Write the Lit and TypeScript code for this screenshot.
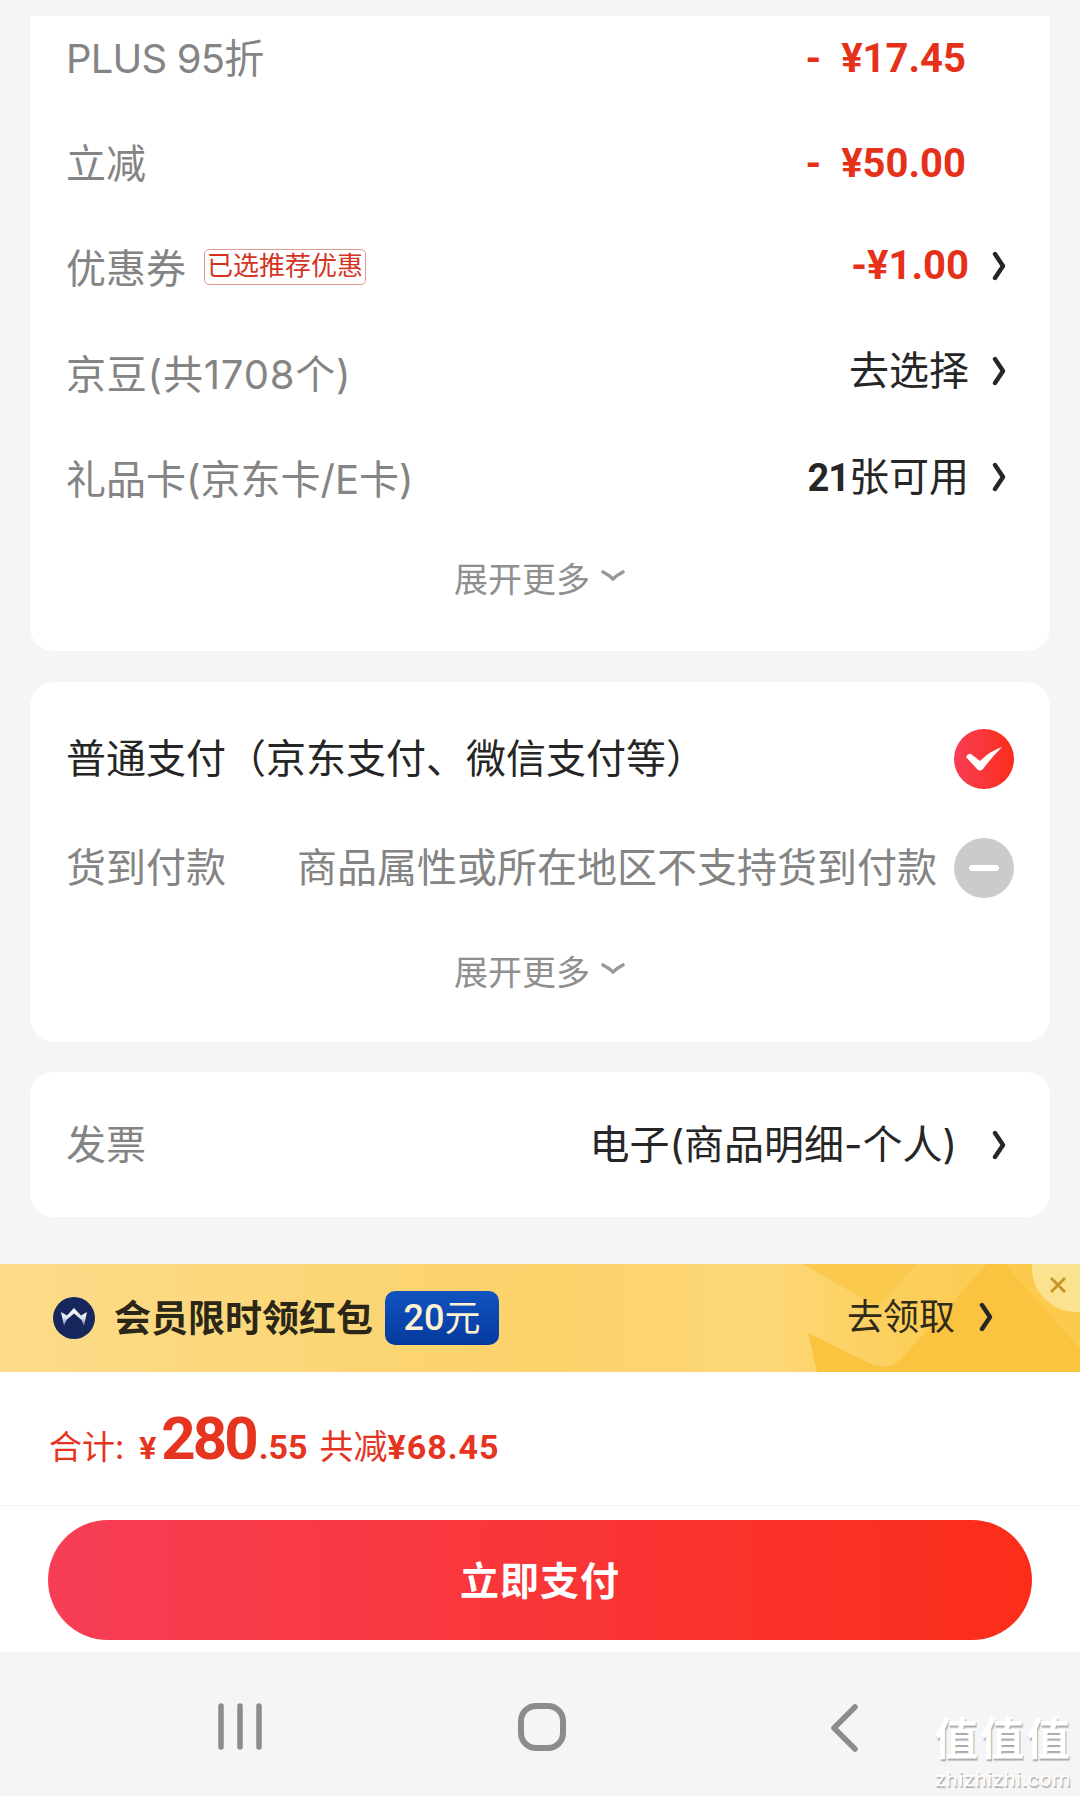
import { LitElement, html, css, svg } from "lit";
import { customElement } from "lit/decorators.js";

const chev = html`<svg class="chev" viewBox="0 0 14 30"><path d="M3 3 L11 15 L3 27" fill="none" stroke="#262626" stroke-width="4.4" stroke-linecap="round" stroke-linejoin="round"/></svg>`;
const more = html`<div class="more"><span>展开更多</span><svg viewBox="0 0 26 14"><path d="M3 3 Q9 6 13 10 Q17 6 23 3" fill="none" stroke="#999" stroke-width="3.6" stroke-linecap="round" stroke-linejoin="round"/></svg></div>`;

@customElement("app-root")
export class AppRoot extends LitElement {
  static styles = css`
    :host { display: flex; flex-direction: column; position: relative; width: 1080px; height: 1796px; overflow: hidden; background: #f5f5f5; font-family: Inter, "Noto Sans CJK SC", sans-serif; color: #262626; }
    * { box-sizing: border-box; }
    .card { background: #fff; margin: 0 30px; border-radius: 24px; padding: 0 36px; }
    .c1 { margin-top: 16px; height: 635px; border-radius: 0 0 24px 24px; }
    .c2 { margin-top: 31px; height: 360px; padding-top: 22px; }
    .c3 { margin-top: 30px; height: 145px; display: flex; align-items: center; }
    .row { display: flex; align-items: center; justify-content: space-between; height: 105.5px; font-size: 40px; line-height: 1; }
    .c1 .row:first-child { height: 85px; margin-bottom: 10px; }
    .c1 .right { margin-bottom: 7px; }
    .c3 .row { width: 100%; }
    .label { color: #848484; display: flex; align-items: center; white-space: pre; }
    .tight { letter-spacing: -0.8px; }
    .loose { letter-spacing: 0.8px; }
    .tag { margin-left: 18px; margin-top: -4px; font-size: 26px; height: 36px; line-height: 32px; padding: 0 2px; color: #d4331f; border: 1px solid #e09a8e; border-radius: 5px; white-space: nowrap; letter-spacing: 0; }
    .right { display: flex; align-items: center; justify-content: flex-end; }
    .price { color: #e6311a; font-family: Roboto, sans-serif; font-weight: 700; font-size: 40px; white-space: pre; }
    .nochev { margin-right: 48px; }
    .val { color: #262626; font-size: 40px; white-space: pre; }
    .inv { margin-right: 12px; }
    .b { font-family: Roboto, sans-serif; font-weight: 700; font-size: 38px; letter-spacing: -1px; }
    .chev { width: 14px; height: 30px; margin-left: 23px; margin-right: 8px; flex: none; }
    .more { display: flex; align-items: center; justify-content: center; gap: 10px; color: #8f8f8f; font-size: 34px; height: 88px; }
    .more svg { width: 26px; height: 14px; margin-top: -2px; }
    .pay .black { color: #262626; white-space: pre; }
    .pay { height: 109px; }
    .reason { display: flex; align-items: center; gap: 17px; color: #848484; }
    .dot { width: 60px; height: 60px; flex: none; }
    .pay-more { margin-top: 4px; }
    .banner { position: relative; overflow: hidden; margin-top: 47px; height: 108px; background: #fbc440; display: flex; align-items: center; padding-left: 53px; color: #2a2618; }
    .shape { position: absolute; inset: 0; width: 100%; height: 100%; }
    .crown { position: relative; width: 42px; height: 42px; flex: none; }
    .bt { position: relative; margin-left: 19px; font-size: 37px; font-weight: 700; line-height: 1; white-space: nowrap; }
    .amt { position: relative; margin-left: 12px; width: 114px; height: 54px; border-radius: 10px; background: linear-gradient(180deg, #1253c0, #043a9e); color: #fdf3d3; font-size: 36px; display: flex; align-items: center; justify-content: center; line-height: 1; }
    .amt b { font-family: Roboto, sans-serif; font-weight: 500; }
    .go { position: absolute; left: 847px; top: 0; height: 100%; display: flex; align-items: center; font-size: 36px; line-height: 1; color: #2f2a1a; white-space: nowrap; padding-bottom: 2px; }
    .go .chev { margin-left: 24px; }
    .close { position: absolute; right: -40px; top: -40px; width: 88px; height: 88px; border-radius: 50%; background: #fbe28f; }
    .close svg { position: absolute; left: 17px; top: 52px; width: 18px; height: 18px; }
    .total { background: #fff; height: 134px; padding-left: 49px; padding-top: 37px; display: flex; align-items: baseline; color: #e5341f; border-bottom: 1px solid #f3f3f3; font-family: Roboto, sans-serif; white-space: pre; line-height: 1; }
    .total .t { font-size: 33px; font-family: "Noto Sans CJK SC", sans-serif; }
    .total .y { font-size: 32px; font-weight: 700; margin: 0 5px 0 15px; }
    .total .big { font-size: 60px; font-weight: 700; letter-spacing: -3px; margin-right: 3px; }
    .total .dec { font-size: 34px; font-weight: 700; }
    .total .sum { font-size: 34px; font-weight: 700; letter-spacing: 1px; margin-left: 12px; }
    .total .sum span { font-weight: 400; font-family: "Noto Sans CJK SC", sans-serif; letter-spacing: 0; font-size: 34px; }
    .foot { background: #fff; height: 146px; padding: 14px 48px 0; }
    .btn { height: 120px; border-radius: 60px; background: linear-gradient(90deg, #f73e56, #fb2d1a); color: #fff; font-size: 39px; line-height: 1; font-weight: 700; display: flex; align-items: center; justify-content: center; letter-spacing: 1px; }
    .nav { flex: 1; position: relative; }
    .nav svg { position: absolute; top: 50px; }
    .wm { position: absolute; left: 933px; top: 1715px; width: 140px; text-align: center; color: #fff; text-shadow: 1px 2px 1px #aaa; font-family: "Liberation Sans", "Noto Sans CJK SC", sans-serif; }
    .wm .a { font-size: 44px; line-height: 50px; font-weight: 700; letter-spacing: 2px; white-space: nowrap; }
    .wm .d { font-family: Roboto, sans-serif; font-size: 21px; line-height: 25px; margin-top: 2px; letter-spacing: .6px; }
  `;

  render() {
    return html`
      <section class="card c1">
        <div class="row"><div class="label tight">PLUS 95折</div><div class="price nochev">-  ¥17.45</div></div>
        <div class="row"><div class="label">立减</div><div class="price nochev">-  ¥50.00</div></div>
        <div class="row"><div class="label">优惠券<span class="tag">已选推荐优惠</span></div><div class="right"><span class="price">-¥1.00</span>${chev}</div></div>
        <div class="row"><div class="label loose">京豆(共1708个)</div><div class="right"><span class="val">去选择</span>${chev}</div></div>
        <div class="row"><div class="label">礼品卡(京东卡/E卡)</div><div class="right"><span class="val"><span class="b">21</span>张可用</span>${chev}</div></div>
        ${more}
      </section>
      <section class="card c2">
        <div class="row pay"><span class="black">普通支付（京东支付、微信支付等）</span>
          <svg class="dot" viewBox="0 0 60 60"><defs><linearGradient id="g"><stop offset="0" stop-color="#f73e56"/><stop offset="1" stop-color="#fb2d1a"/></linearGradient></defs><circle cx="30" cy="30" r="30" fill="url(#g)"/><path d="M12 28 Q14 24 17 25 L26 32 Q36 22 48 18 Q38 28 29 40 Q26 43 23 40 Z" fill="#fff"/></svg></div>
        <div class="row pay"><span class="label">货到付款</span><span class="reason"><span>商品属性或所在地区不支持货到付款</span>
          <svg class="dot" viewBox="0 0 60 60"><circle cx="30" cy="30" r="30" fill="#cbcbcb"/><rect x="15" y="27" width="30" height="6" rx="3" fill="#fff"/></svg></span></div>
        <div class="pay-more">${more}</div>
      </section>
      <section class="card c3"><div class="row"><span class="label">发票</span><div class="right"><span class="val inv">电子(商品明细-个人)</span>${chev}</div></div></section>
      <section class="banner">
        <svg class="shape" viewBox="0 0 1080 108" preserveAspectRatio="none">
          ${svg`<defs><linearGradient id="lg" gradientUnits="userSpaceOnUse" x1="0" y1="0" x2="990" y2="0"><stop offset="0" stop-color="#fcdc8a"/><stop offset=".55" stop-color="#fbd26a"/><stop offset=".77" stop-color="#fdd878"/><stop offset=".91" stop-color="#fccf5c"/><stop offset="1" stop-color="#fccb52"/></linearGradient></defs>
          <path d="M1005 0 L1080 85 V0 Z" fill="#fcca4c"/>
          <path d="M803 0 H917 L877 43 Z" fill="#fbc94e"/>
          <path d="M0 0 H803 L877 43 L917 0 H987 L900 96 Q890 106 873 101 L808 69 L817 108 H0 Z" fill="url(#lg)"/>`}
        </svg>
        <svg class="crown" viewBox="0 0 42 42"><defs><linearGradient id="cw" x1="0" y1="0" x2="0" y2="1"><stop offset="0" stop-color="#fff"/><stop offset=".55" stop-color="#dfe6f2"/><stop offset="1" stop-color="#5a6a98"/></linearGradient></defs><circle cx="21" cy="21" r="21" fill="#17265c"/><path d="M8 15 L14 18.500 L21 11 L28 18.500 L34 15 L31 29 L28.500 23 L21 16.500 L13.500 23 L11 29 Z" fill="url(#cw)"/></svg>
        <span class="bt">会员限时领红包</span>
        <span class="amt"><b>20</b>元</span>
        <span class="go">去领取${chev}</span>
        <div class="close"><svg viewBox="0 0 18 18"><path d="M2 2 L16 16 M16 2 L2 16" stroke="#c9962a" stroke-width="3"/></svg></div>
      </section>
      <section class="total"><span class="t">合计:</span><span class="y">¥</span><span class="big">280</span><span class="dec">.55</span><span class="sum"><span>共减</span>¥68.45</span></section>
      <section class="foot"><div class="btn">立即支付</div></section>
      <nav class="nav">
        <svg style="left:216px" width="48" height="48" viewBox="0 0 48 48"><path d="M5 4 V45 M24 4 V45 M43 4 V45" stroke="#8c8c8c" stroke-width="5.5" stroke-linecap="round"/></svg>
        <svg style="left:517px" width="50" height="50" viewBox="0 0 50 50"><rect x="4" y="4" width="42" height="42" rx="15" fill="none" stroke="#8c8c8c" stroke-width="6"/></svg>
        <svg style="left:828px" width="32" height="50" viewBox="0 0 32 50"><path d="M27 5 L6 26 L27 47" fill="none" stroke="#8c8c8c" stroke-width="5.5" stroke-linecap="round" stroke-linejoin="round"/></svg>
      </nav>
      <div class="wm"><div class="a">值值值</div><div class="d">zhizhizhi.com</div></div>
    `;
  }
}
